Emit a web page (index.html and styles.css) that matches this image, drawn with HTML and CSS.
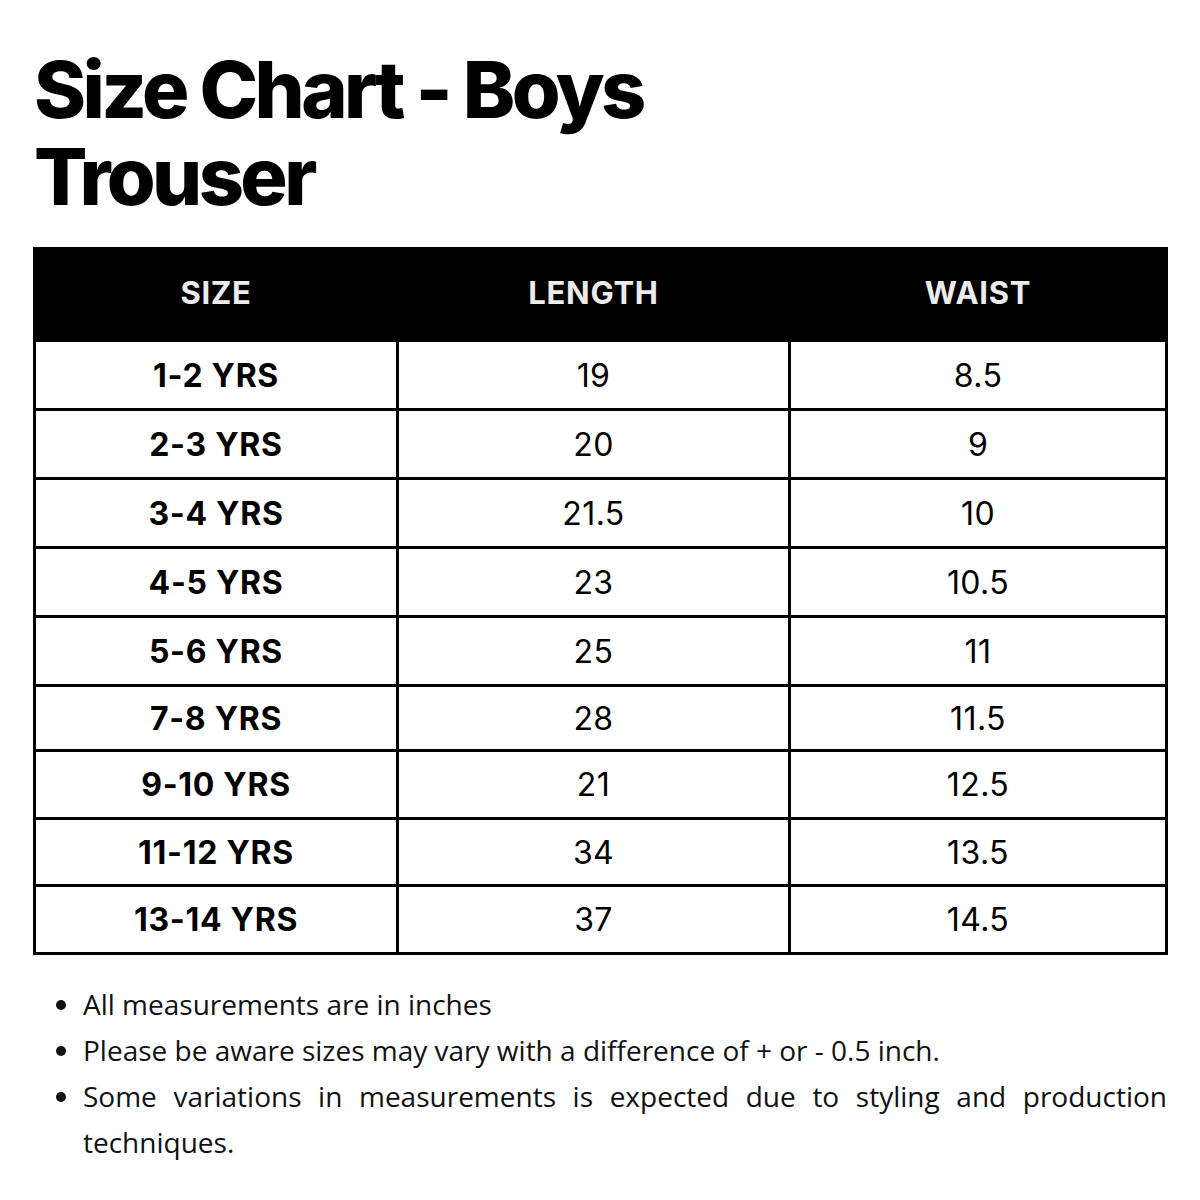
FILE: index.html
```html
<!DOCTYPE html>
<html>
<head>
<meta charset="utf-8">
<link rel="stylesheet" href="styles.css">
</head>
<body>
<div class="page">
  <h1 class="title">Size Chart - Boys<br>Trouser</h1>
  <table class="chart">
    <colgroup>
      <col class="c1"><col class="c2"><col class="c3">
    </colgroup>
    <thead>
      <tr><th>SIZE</th><th>LENGTH</th><th>WAIST</th></tr>
    </thead>
    <tbody>
      <tr class="r69"><td class="size">1-2 YRS</td><td>19</td><td>8.5</td></tr>
      <tr class="r69"><td class="size">2-3 YRS</td><td>20</td><td>9</td></tr>
      <tr class="r69"><td class="size">3-4 YRS</td><td>21.5</td><td>10</td></tr>
      <tr class="r69"><td class="size">4-5 YRS</td><td>23</td><td>10.5</td></tr>
      <tr class="r69"><td class="size">5-6 YRS</td><td>25</td><td>11</td></tr>
      <tr class="r65"><td class="size">7-8 YRS</td><td>28</td><td>11.5</td></tr>
      <tr class="r68"><td class="size">9-10 YRS</td><td>21</td><td>12.5</td></tr>
      <tr class="r67"><td class="size">11-12 YRS</td><td>34</td><td>13.5</td></tr>
      <tr class="r68"><td class="size">13-14 YRS</td><td>37</td><td>14.5</td></tr>
    </tbody>
  </table>
  <ul class="notes">
    <li>All measurements are in inches</li>
    <li>Please be aware sizes may vary with a difference of + or - 0.5 inch.</li>
    <li class="just">Some variations in measurements is expected due to styling and production techniques.</li>
  </ul>
</div>
</body>
</html>
```
FILE: styles.css
```css
html, body {
  margin: 0;
  padding: 0;
  background: #fff;
}
.page {
  width: 1200px;
  height: 1200px;
  padding: 46px 33px 0 33px;
  box-sizing: border-box;
}
.title {
  margin: 0 0 0 1px;
  font-family: Inter, "Liberation Sans", sans-serif;
  font-weight: 800;
  font-size: 79px;
  line-height: 87px;
  letter-spacing: -3.6px;
  color: #000;
}
.chart {
  margin-top: 27px;
  width: 1132px;
  border-collapse: collapse;
  table-layout: fixed;
  font-family: Inter, "Liberation Sans", sans-serif;
  color: #000;
}
.c1 { width: 363px; }
.c2 { width: 392px; }
.c3 { width: 377px; }
.chart th {
  background: #000;
  color: #ececec;
  font-weight: 700;
  font-size: 31px;
  letter-spacing: 0.7px;
  height: 85px;
  padding: 0 0 4px 0;
  border: 3px solid #000;
  text-align: center;
}
.chart td {
  border: 3px solid #000;
  padding: 0;
  text-align: center;
  font-size: 32px;
  font-weight: 400;
  letter-spacing: 0.4px;
}
.chart td.size { font-weight: 700; letter-spacing: 0.7px; }
.r69 td { height: 66px; }
.r65 td { height: 62px; }
.r68 td { height: 65px; }
.r67 td { height: 64px; }
.notes {
  margin: 26px 0 0 0;
  padding: 0 0 0 50px;
  font-family: "Open Sans", "Liberation Sans", sans-serif;
  font-size: 28px;
  line-height: 46px;
  color: #111;
  list-style: disc;
}
.notes li { padding-left: 0; }
.notes li.just {
  text-align: justify;
}
```
